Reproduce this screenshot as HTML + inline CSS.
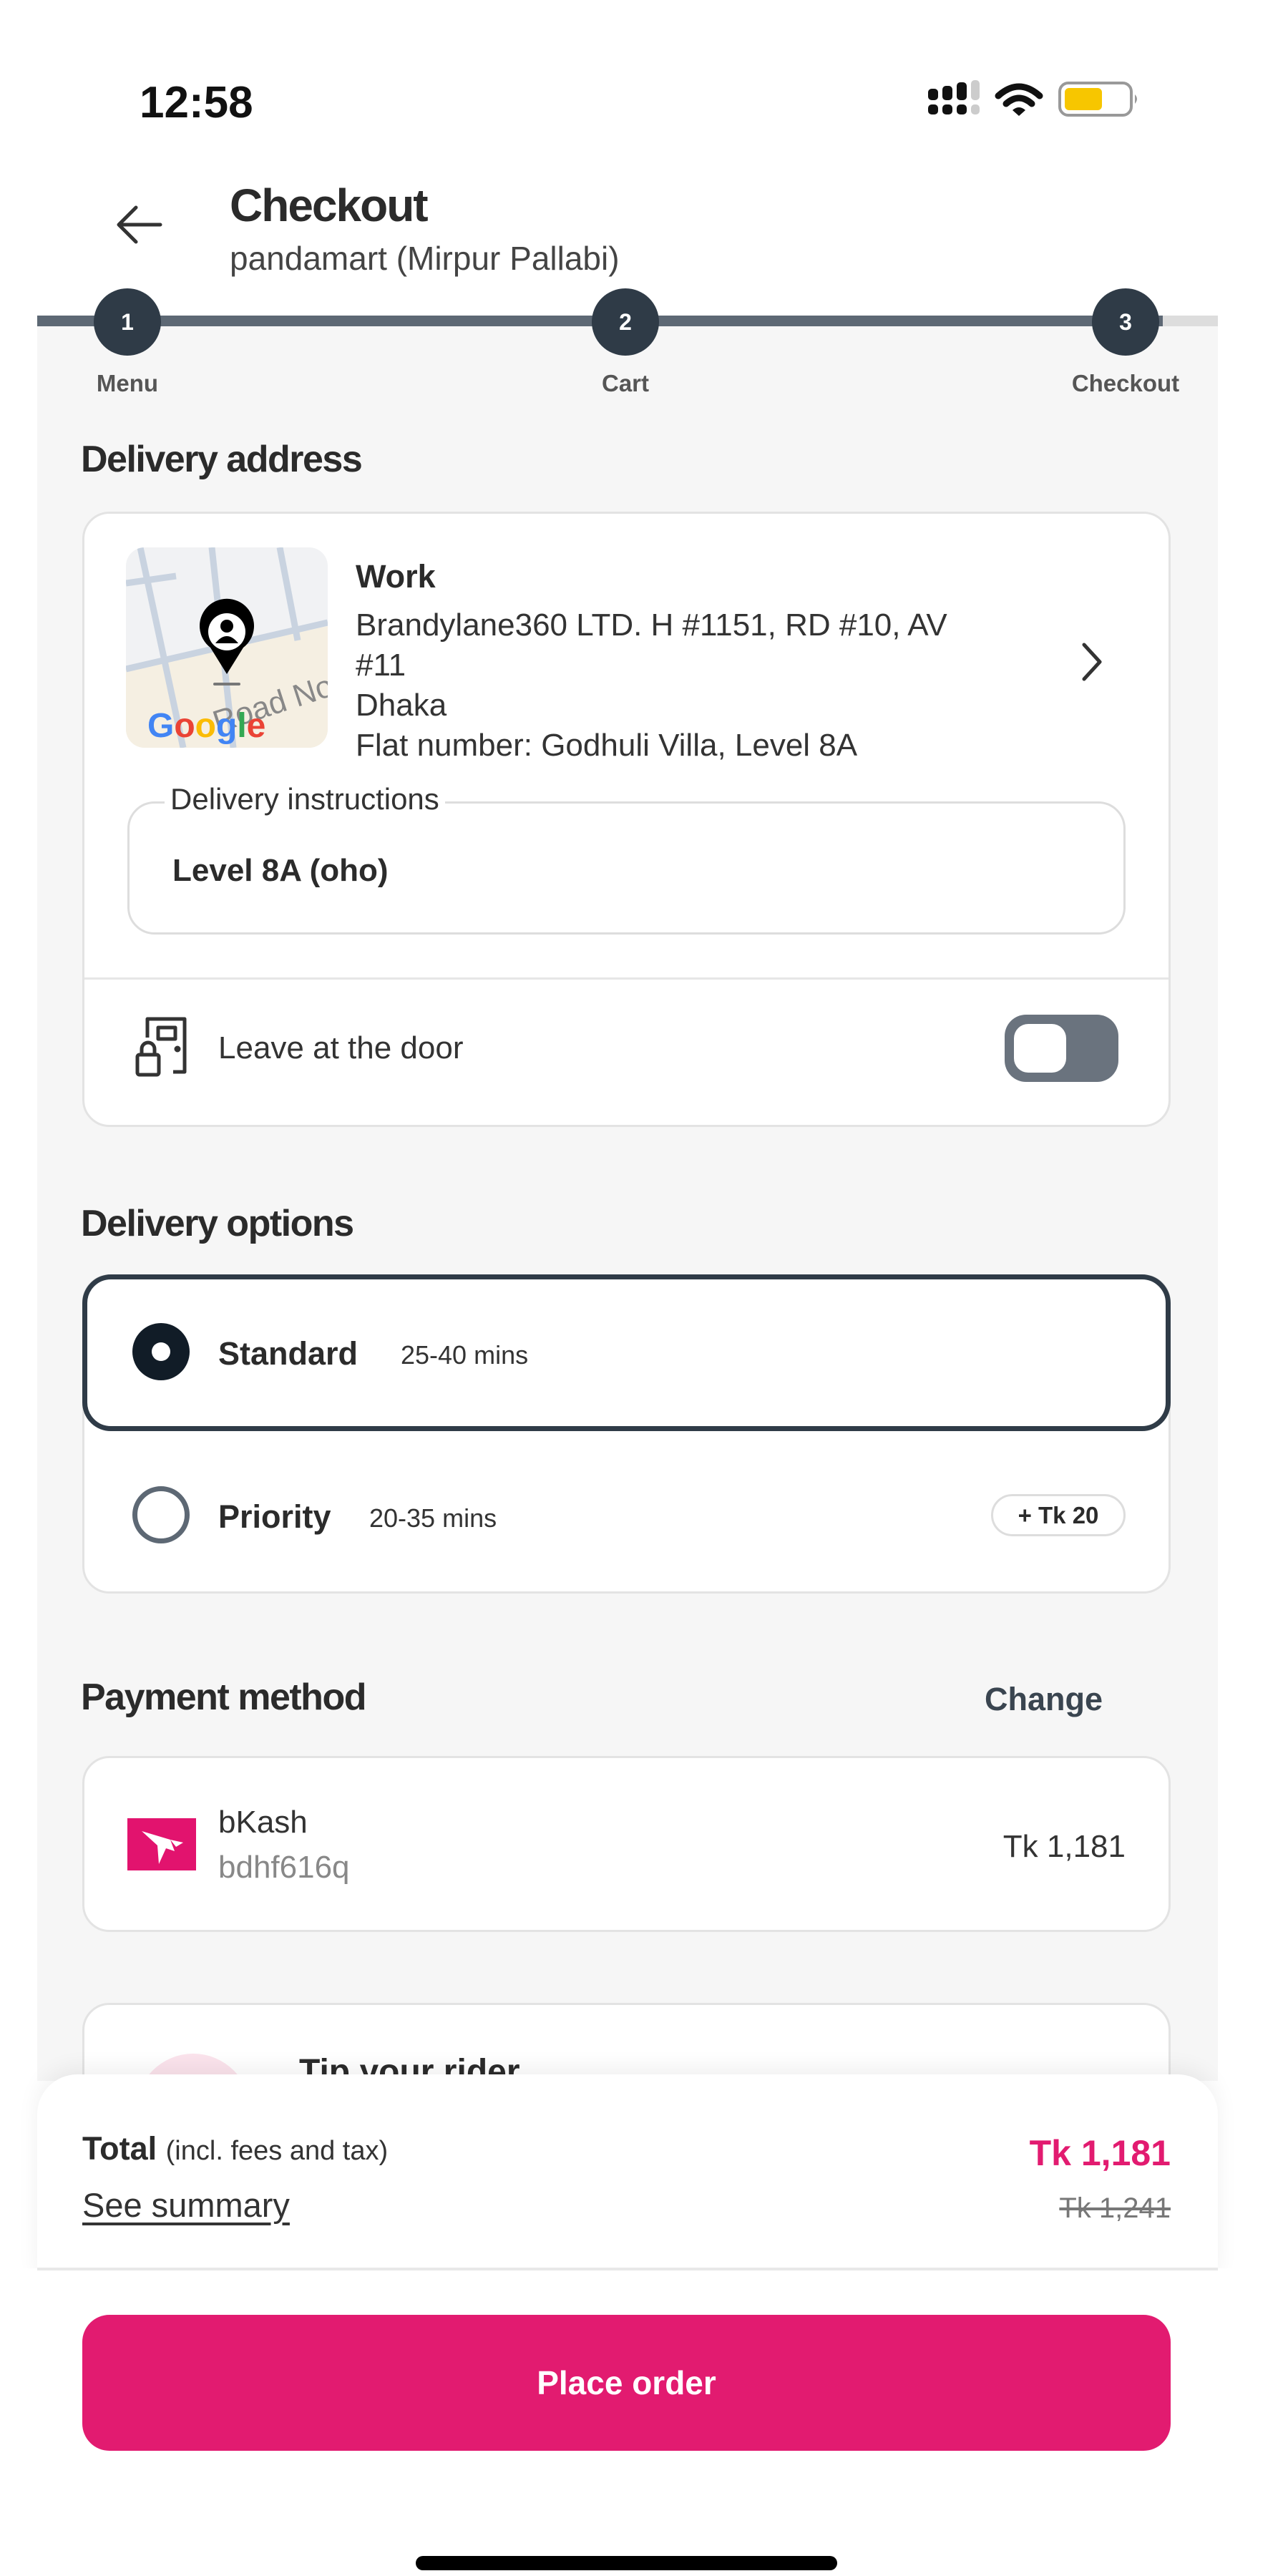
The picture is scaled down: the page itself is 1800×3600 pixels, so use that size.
<!DOCTYPE html>
<html><head><meta charset="utf-8">
<style>
*{margin:0;padding:0;box-sizing:border-box}
body{width:1800px;height:3600px;background:#fff;font-family:"Liberation Sans",sans-serif;color:#2b2b2b;position:relative;overflow:hidden}
.a{position:absolute;white-space:nowrap}
.gray{position:absolute;left:52px;top:448px;width:1650px;height:2460px;background:#f6f6f6}
.card{position:absolute;background:#fff;border:3px solid #e3e3e3;border-radius:38px}
.step{position:absolute;width:94px;height:94px;border-radius:50%;background:#2f3b47;color:#fff;font-weight:bold;font-size:32px;display:flex;align-items:center;justify-content:center}
.lbl{position:absolute;font-size:33px;color:#555;font-weight:bold;transform:translateX(-50%)}
.h2{font-size:52px;font-weight:bold;color:#2b2b2b;letter-spacing:-1.5px}
.t44{font-size:44px;color:#333}
</style></head><body>
<!-- status bar -->
<div class="a" style="left:195px;top:108px;font-size:62px;font-weight:bold;color:#111">12:58</div>
<svg class="a" style="left:1295px;top:112px" width="300" height="54" viewBox="0 0 300 54">
 <g fill="#111"><rect x="2" y="12" width="14" height="16" rx="5"/><rect x="22" y="8" width="14" height="20" rx="5"/><rect x="42" y="3" width="14" height="25" rx="5"/>
 <rect x="2" y="34" width="14" height="14" rx="5"/><rect x="22" y="34" width="14" height="14" rx="5"/><rect x="42" y="34" width="14" height="14" rx="5"/></g>
 <g fill="#ccc"><rect x="62" y="0" width="12" height="28" rx="5"/><rect x="62" y="34" width="12" height="14" rx="5"/></g>
 <path d="M100 22 Q129 -4 158 22" stroke="#111" stroke-width="9" fill="none" stroke-linecap="round"/>
 <path d="M111 33 Q129 17 147 33" stroke="#111" stroke-width="9" fill="none" stroke-linecap="round"/>
 <path d="M120 42 L129 50 L138 42 Q129 34 120 42Z" fill="#111"/>
 <rect x="186" y="4" width="100" height="45" rx="12" fill="#fff" stroke="#999" stroke-width="4"/>
 <rect x="193" y="11" width="52" height="31" rx="6" fill="#f7c600"/>
 <path d="M291 20 Q297 26 291 33Z" fill="#999"/>
</svg>
<!-- header -->
<svg class="a" style="left:158px;top:284px" width="72" height="60" viewBox="0 0 72 60"><path d="M66 30H8M32 6L8 30L32 54" stroke="#333" stroke-width="5" fill="none" stroke-linecap="round" stroke-linejoin="round"/></svg>
<div class="a" style="left:321px;top:250px;font-size:64px;font-weight:bold;letter-spacing:-2px;color:#2b2b2b">Checkout</div>
<div class="a" style="left:321px;top:334px;font-size:46px;color:#444">pandamart (Mirpur Pallabi)</div>
<div class="gray"></div>
<!-- progress -->
<div class="a" style="left:52px;top:441px;width:1573px;height:15px;background:#5d6874"></div>
<div class="a" style="left:1625px;top:441px;width:77px;height:15px;background:#ddd"></div>
<div class="step" style="left:131px;top:403px">1</div>
<div class="step" style="left:827px;top:403px">2</div>
<div class="step" style="left:1526px;top:403px">3</div>
<div class="lbl" style="left:178px;top:517px">Menu</div>
<div class="lbl" style="left:874px;top:517px">Cart</div>
<div class="lbl" style="left:1573px;top:517px">Checkout</div>
<!-- delivery address -->
<div class="a h2" style="left:113px;top:612px">Delivery address</div>
<div class="card" style="left:115px;top:715px;width:1521px;height:860px"></div>
<svg class="a" style="left:176px;top:765px" width="282" height="280" viewBox="0 0 282 280">
 <defs><clipPath id="c"><rect width="282" height="280" rx="26"/></clipPath></defs>
 <g clip-path="url(#c)">
 <rect width="282" height="280" fill="#f1f2f4"/>
 <path d="M0 170 L282 110 L282 280 L0 280Z" fill="#f5efe2"/>
 <g stroke="#c9d3e0" stroke-width="9" fill="none">
 <path d="M20 0 L80 280"/><path d="M120 0 L150 280"/><path d="M215 0 L240 130"/><path d="M0 50 L70 40"/><path d="M0 170 L282 105"/>
 </g>
 <text x="120" y="248" font-size="44" fill="#888" transform="rotate(-18 160 230)" font-family="Liberation Sans">Road No. 9A</text>
 <text x="30" y="265" font-size="48" font-weight="bold" font-family="Liberation Sans"><tspan fill="#4285f4">G</tspan><tspan fill="#ea4335">o</tspan><tspan fill="#fbbc05">o</tspan><tspan fill="#4285f4">g</tspan><tspan fill="#34a853">l</tspan><tspan fill="#ea4335">e</tspan></text>
 <path d="M141 177 L118 140 A38 38 0 1 1 164 140Z" fill="#000"/>
 <circle cx="141" cy="118" r="26" fill="#fff"/>
 <circle cx="141" cy="110" r="9" fill="#000"/>
 <path d="M125 134 Q141 114 157 134Z" fill="#000"/>
 <rect x="122" y="189" width="38" height="4" rx="2" fill="#777"/>
 </g>
</svg>
<div class="a" style="left:497px;top:780px;font-size:45px;font-weight:bold">Work</div>
<div class="a t44" style="left:497px;top:846px;line-height:56px">Brandylane360 LTD. H #1151, RD #10, AV<br>#11<br>Dhaka<br>Flat number: Godhuli Villa, Level 8A</div>
<svg class="a" style="left:1505px;top:895px" width="40" height="60" viewBox="0 0 40 60"><path d="M10 6L32 30L10 54" stroke="#333" stroke-width="5" fill="none" stroke-linecap="round" stroke-linejoin="round"/></svg>
<div class="a" style="left:178px;top:1120px;width:1395px;height:186px;border:3px solid #ddd;border-radius:38px"></div>
<div class="a" style="left:230px;top:1093px;font-size:42px;color:#333;background:#fff;padding:0 8px">Delivery instructions</div>
<div class="a" style="left:241px;top:1192px;font-size:44px;font-weight:bold;color:#2b2b2b">Level 8A (oho)</div>
<div class="a" style="left:118px;top:1366px;width:1515px;height:3px;background:#e6e6e6"></div>
<svg class="a" style="left:186px;top:1420px" width="80" height="86" viewBox="0 0 80 86"><g stroke="#333" stroke-width="5" fill="none" stroke-linejoin="round"><path d="M20 30V4H72V78H56"/><rect x="35" y="16" width="24" height="16"/><circle cx="62" cy="46" r="2" fill="#333"/><rect x="6" y="54" width="30" height="28" rx="3"/><path d="M12 54V46A9 9 0 0 1 30 46V54"/></g></svg>
<div class="a t44" style="left:305px;top:1440px">Leave at the door</div>
<div class="a" style="left:1404px;top:1418px;width:159px;height:94px;border-radius:30px;background:#6a737e"></div>
<div class="a" style="left:1417px;top:1431px;width:73px;height:68px;border-radius:20px;background:#fff"></div>
<!-- delivery options -->
<div class="a h2" style="left:113px;top:1680px">Delivery options</div>
<div class="card" style="left:115px;top:1781px;width:1521px;height:446px"></div>
<div class="a" style="left:115px;top:1781px;width:1521px;height:219px;border:7px solid #2f3b47;border-radius:40px;background:#fff"></div>
<div class="a" style="left:185px;top:1849px;width:80px;height:80px;border-radius:50%;background:#111c27"></div>
<div class="a" style="left:212px;top:1876px;width:26px;height:26px;border-radius:50%;background:#fff"></div>
<div class="a" style="left:305px;top:1866px;font-size:45px;font-weight:bold">Standard</div>
<div class="a" style="left:560px;top:1873px;font-size:36px;color:#333">25-40 mins</div>
<div class="a" style="left:185px;top:2077px;width:80px;height:80px;border-radius:50%;border:7px solid #5d6874"></div>
<div class="a" style="left:305px;top:2094px;font-size:45px;font-weight:bold">Priority</div>
<div class="a" style="left:516px;top:2101px;font-size:36px;color:#333">20-35 mins</div>
<div class="a" style="left:1385px;top:2088px;width:188px;height:59px;border:3px solid #ddd;border-radius:30px;font-size:33px;font-weight:bold;display:flex;align-items:center;justify-content:center">+ Tk 20</div>
<!-- payment -->
<div class="a h2" style="left:113px;top:2342px">Payment method</div>
<div class="a" style="left:1376px;top:2349px;font-size:45px;font-weight:bold;color:#3a4550">Change</div>
<div class="card" style="left:115px;top:2454px;width:1521px;height:246px"></div>
<svg class="a" style="left:178px;top:2541px" width="96" height="73" viewBox="0 0 96 73"><rect width="96" height="73" fill="#e2136e"/><path d="M20 18L60 30L42 38Z M42 38L60 30L66 46Z M42 38L44 64L54 42Z M60 30L78 34L68 40Z" fill="#fff"/></svg>
<div class="a t44" style="left:305px;top:2522px">bKash</div>
<div class="a" style="left:305px;top:2585px;font-size:44px;color:#888">bdhf616q</div>
<div class="a t44" style="left:1573px;top:2556px;transform:translateX(-100%)">Tk 1,181</div>
<!-- tip card partial -->
<div class="card" style="left:115px;top:2799px;width:1521px;height:300px"></div>
<div class="a" style="left:190px;top:2870px;width:160px;height:160px;border-radius:50%;background:#fbe3ec"></div>
<div class="a" style="left:418px;top:2868px;font-size:48px;font-weight:bold">Tip your rider</div>
<!-- bottom sheet -->
<div class="a" style="left:52px;top:2899px;width:1650px;height:290px;background:#fff;border-radius:56px 56px 0 0;box-shadow:0 -10px 30px rgba(0,0,0,0.06)"></div>
<div class="a" style="left:0;top:3170px;width:1800px;height:430px;background:#fff"></div>
<div class="a" style="left:52px;top:3169px;width:1650px;height:4px;background:#e8e8e8"></div>
<div class="a" style="left:115px;top:2977px;font-size:45px;font-weight:bold">Total <span style="font-size:38px;font-weight:normal;color:#333">(incl. fees and tax)</span></div>
<div class="a" style="left:1636px;top:2980px;font-size:50px;font-weight:bold;color:#e21b70;transform:translateX(-100%)">Tk 1,181</div>
<div class="a" style="left:115px;top:3054px;font-size:47px;color:#333;text-decoration:underline;text-underline-offset:8px">See summary</div>
<div class="a" style="left:1636px;top:3064px;font-size:40px;color:#777;text-decoration:line-through;transform:translateX(-100%)">Tk 1,241</div>
<div class="a" style="left:115px;top:3235px;width:1521px;height:190px;border-radius:38px;background:#e21b70;color:#fff;font-size:46px;font-weight:bold;display:flex;align-items:center;justify-content:center">Place order</div>
<div class="a" style="left:581px;top:3572px;width:589px;height:20px;border-radius:10px;background:#000"></div>
</body></html>
